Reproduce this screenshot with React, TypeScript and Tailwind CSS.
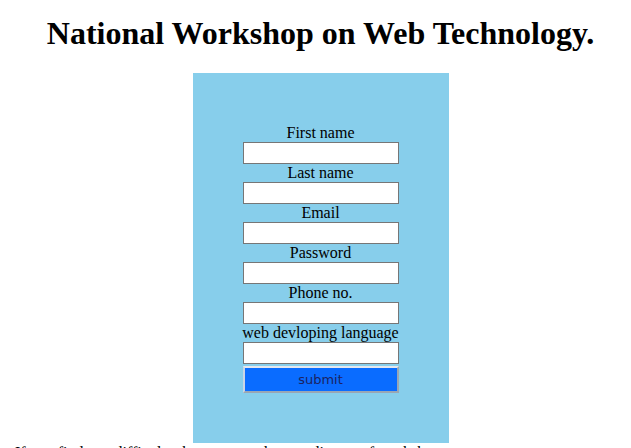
import React from "react";

const fields = [
  "First name",
  "Last name",
  "Email",
  "Password",
  "Phone no.",
  "web devloping language",
];

export default function App() {
  return (
    <div
      className="w-[631px] h-[448px] overflow-hidden bg-white text-black pl-[10px]"
      style={{ fontFamily: '"Liberation Serif", "Times New Roman", serif' }}
    >
      <h1 className="mt-[15px] text-center text-[32px] font-bold leading-[37px]">
        National Workshop on Web Technology.
      </h1>
      <div className="mt-[21px] flex justify-center">
        <form className="flex w-[256px] flex-col items-center bg-[#87ceeb] px-[50px] pt-[51px] pb-[50px]">
          {fields.map((f) => (
            <div key={f} className="flex w-[156px] flex-col items-center">
              <label className="h-[18px] whitespace-nowrap text-[16px] leading-[18px]">
                {f}
              </label>
              <input
                type="text"
                className="h-[22px] w-[156px] border border-[#767676] bg-white"
              />
            </div>
          ))}
          <button
            type="button"
            className="mt-[2px] h-[27px] w-[156px] border-2 border-t-[#e4e8ef] border-l-[#c9d6e6] border-r-[#9aa6b4] border-b-[#9aa6b4] bg-[#0a6cff] text-[13px] text-[#1c2361]"
            style={{ fontFamily: '"DejaVu Sans", Verdana, sans-serif' }}
          >
            submit
          </button>
        </form>
      </div>
      <p className="mt-[1px] pl-[5px] text-[16px] leading-[18px] whitespace-nowrap">
        If you find any difficulty then contact the coordinator of workshop
      </p>
    </div>
  );
}
